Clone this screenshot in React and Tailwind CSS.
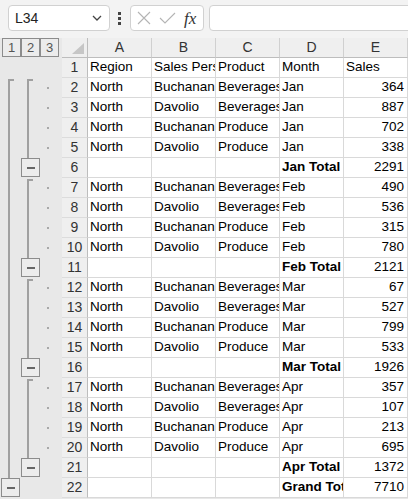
import React from "react";

// rows of the sheet: [region, person, product, month, sales, kind]
const rows = [
  ["Region", "Sales Person", "Product", "Month", "Sales", "head"],
  ["North", "Buchanan", "Beverages", "Jan", 364, "first"],
  ["North", "Davolio", "Beverages", "Jan", 887, "detail"],
  ["North", "Buchanan", "Produce", "Jan", 702, "detail"],
  ["North", "Davolio", "Produce", "Jan", 338, "detail"],
  ["", "", "", "Jan Total", 2291, "sub"],
  ["North", "Buchanan", "Beverages", "Feb", 490, "group"],
  ["North", "Davolio", "Beverages", "Feb", 536, "detail"],
  ["North", "Buchanan", "Produce", "Feb", 315, "detail"],
  ["North", "Davolio", "Produce", "Feb", 780, "detail"],
  ["", "", "", "Feb Total", 2121, "sub"],
  ["North", "Buchanan", "Beverages", "Mar", 67, "group"],
  ["North", "Davolio", "Beverages", "Mar", 527, "detail"],
  ["North", "Buchanan", "Produce", "Mar", 799, "detail"],
  ["North", "Davolio", "Produce", "Mar", 533, "detail"],
  ["", "", "", "Mar Total", 1926, "sub"],
  ["North", "Buchanan", "Beverages", "Apr", 357, "group"],
  ["North", "Davolio", "Beverages", "Apr", 107, "detail"],
  ["North", "Buchanan", "Produce", "Apr", 213, "detail"],
  ["North", "Davolio", "Produce", "Apr", 695, "detail"],
  ["", "", "", "Apr Total", 1372, "sub"],
  ["", "", "", "Grand Total", 7710, "grand"],
];

const MinusBox = () => (
  <div className="w-[19px] h-[19px] border border-[#8c8c8c] bg-[#ececec] flex items-center justify-center">
    <div className="w-[8px] h-[2px] bg-[#666]" />
  </div>
);

// outline gutter for one row (levels 1 & 2 + detail dots)
const Outline = ({ kind }) => {
  if (kind === "head") return <div className="h-[20px]" />;
  const lvl1 =
    kind === "grand" ? (
      <div className="ml-[1px]">
        <MinusBox />
      </div>
    ) : kind === "first" ? (
      <div className="ml-[8px] mt-[1px] w-[6px] h-[19px] border-l-2 border-t-2 border-[#a0a0a0]" />
    ) : (
      <div className="ml-[8px] w-[2px] h-[20px] bg-[#a0a0a0]" />
    );
  let lvl2 = null;
  if (kind === "sub") lvl2 = <MinusBox />;
  else if (kind === "first" || kind === "group")
    lvl2 = <div className="ml-[6px] mt-[1px] w-[6px] h-[19px] border-l-2 border-t-2 border-[#a0a0a0]" />;
  else if (kind === "detail") lvl2 = <div className="ml-[6px] w-[2px] h-[20px] bg-[#a0a0a0]" />;
  const isDetail = kind === "first" || kind === "group" || kind === "detail";
  return (
    <div className="flex h-[20px]">
      <div className="w-[21px] shrink-0">{lvl1}</div>
      <div className="w-[21px] shrink-0">{lvl2}</div>
      <div className="w-[20px] shrink-0 flex items-center">
        {isDetail && <div className="ml-[5px] w-[2px] h-[2px] bg-[#a8a8a8]" />}
      </div>
    </div>
  );
};

const Cell = ({ children, right, bold }) => (
  <div
    className={`h-[20px] border-r border-b border-[#d9d9d9] bg-white overflow-hidden whitespace-nowrap flex items-center text-black text-[13.5px] ${
      right ? "justify-end pr-[3px]" : "pl-[2px]"
    } ${bold ? "font-bold" : ""}`}
  >
    <span>{children}</span>
  </div>
);

export default function App() {
  return (
    <div className="w-[408px] h-[499px] overflow-hidden bg-[#e8e8e8] text-[14px] font-['Liberation_Sans',Arial,sans-serif]">
      {/* formula bar */}
      <div className="h-[38px] bg-[#f3f3f3] flex items-start pt-[5px] overflow-hidden">
        <div className="ml-[8px] w-[102px] h-[26px] bg-white border border-[#d1d1d1] rounded-[4px] flex items-center justify-between pl-[6px] pr-[7px] shrink-0">
          <span className="text-[#222]">L34</span>
          <svg width="10" height="6" viewBox="0 0 10 6">
            <path d="M1 1 L5 5 L9 1" fill="none" stroke="#444" strokeWidth="1.3" />
          </svg>
        </div>
        <div className="ml-[8px] mt-[7px] flex flex-col gap-[2px] shrink-0">
          <div className="w-[3px] h-[3px] bg-[#444]" />
          <div className="w-[3px] h-[3px] bg-[#444]" />
          <div className="w-[3px] h-[3px] bg-[#444]" />
        </div>
        <div className="ml-[9px] w-[74px] h-[26px] bg-white border border-[#d1d1d1] rounded-[4px] flex items-center pl-[6px] shrink-0">
          <svg width="14" height="14" viewBox="0 0 14 14">
            <path d="M1 1 L13 13 M13 1 L1 13" stroke="#b4b4b4" strokeWidth="1.1" />
          </svg>
          <svg className="ml-[8px]" width="17" height="12" viewBox="0 0 17 12">
            <path d="M1 6 L6 11 L16 1" fill="none" stroke="#b4b4b4" strokeWidth="1.1" />
          </svg>
          <span className="ml-[8px] italic text-[17px] leading-none text-[#333] font-['Liberation_Serif',serif]">fx</span>
        </div>
        <div className="ml-[5px] w-[220px] h-[26px] bg-white border border-[#d1d1d1] rounded-[4px] shrink-0" />
      </div>

      {/* sheet */}
      <div className="grid grid-cols-[62px_26px_repeat(5,64px)]">
        {/* header row */}
        <div className="h-[20px] flex items-start">
          {["1", "2", "3"].map((n, i) => (
            <div
              key={n}
              className={`w-[19px] h-[19px] border border-[#8c8c8c] bg-[#ececec] text-[13px] text-[#555] flex items-center justify-center ${
                i === 0 ? "ml-[2px]" : ""
              }`}
            >
              {n}
            </div>
          ))}
        </div>
        <div className="h-[20px] bg-[#efefef] border-r border-b border-[#bdbdbd] flex items-end justify-end pr-[3px] pb-[3px]">
          <svg width="12" height="11" viewBox="0 0 12 11">
            <path d="M12 0 L12 11 L0 11 Z" fill="#c6c6c6" />
          </svg>
        </div>
        {["A", "B", "C", "D", "E"].map((c) => (
          <div
            key={c}
            className="h-[20px] bg-[#efefef] border-r border-b border-r-[#d0d0d0] border-b-[#bdbdbd] flex items-center justify-center text-[#333]"
          >
            {c}
          </div>
        ))}

        {rows.map((r, i) => {
          const kind = r[5];
          const bold = kind === "sub" || kind === "grand";
          return (
            <React.Fragment key={i}>
              <Outline kind={kind} />
              <div className="h-[20px] bg-[#efefef] border-r border-b border-r-[#bdbdbd] border-b-[#dcdcdc] flex items-center justify-center text-[#333]">
                {i + 1}
              </div>
              <Cell>{r[0]}</Cell>
              <Cell>{r[1]}</Cell>
              <Cell>{r[2]}</Cell>
              <Cell bold={bold}>{r[3]}</Cell>
              <Cell right={kind !== "head"}>{r[4]}</Cell>
            </React.Fragment>
          );
        })}
      </div>
    </div>
  );
}
